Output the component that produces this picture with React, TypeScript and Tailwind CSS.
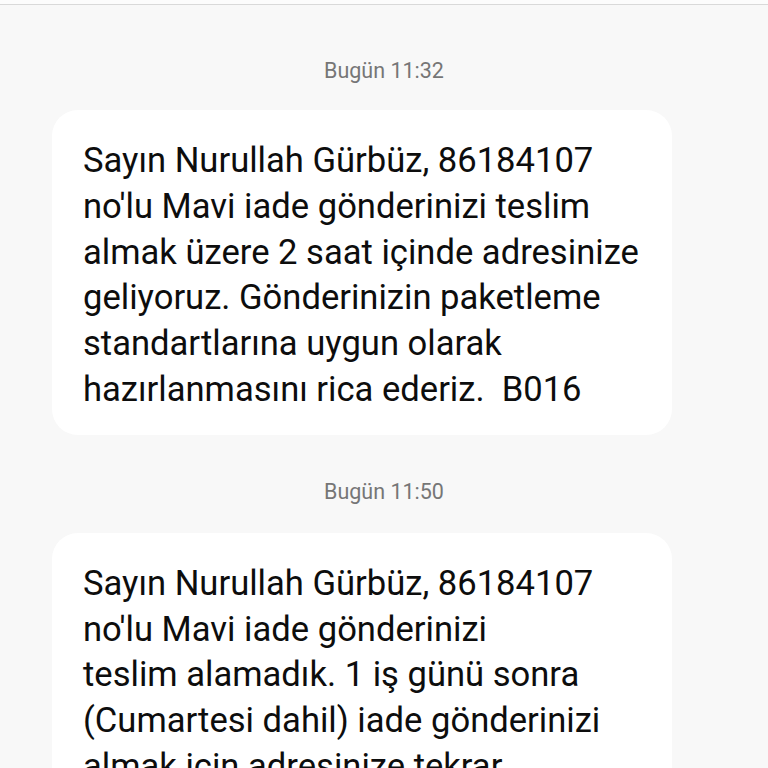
const messages = [
  {
    time: "Bugün 11:32",
    lines: [
      "Sayın Nurullah Gürbüz, 86184107",
      "no'lu Mavi iade gönderinizi teslim",
      "almak üzere 2 saat içinde adresinize",
      "geliyoruz. Gönderinizin paketleme",
      "standartlarına uygun olarak",
      "hazırlanmasını rica ederiz.\u00a0\u00a0B016",
    ],
  },
  {
    time: "Bugün 11:50",
    lines: [
      "Sayın Nurullah Gürbüz, 86184107",
      "no'lu Mavi iade gönderinizi",
      "teslim alamadık. 1 iş günü sonra",
      "(Cumartesi dahil) iade gönderinizi",
      "almak için adresinize tekrar",
      "geleceğiz.",
    ],
  },
];

export default function App() {
  return (
    <div
      className="min-h-screen bg-[#f8f8f8] overflow-hidden"
      style={{ height: 768, fontFamily: "Roboto, 'Noto Sans', sans-serif" }}
    >
      <div className="h-[5px] bg-[#fcfcfc] border-b border-[#d9d9d9]" />
      {messages.map((m, i) => (
        <div key={i}>
          <div
            className={`text-center text-[21.5px] leading-[24px] text-[#767676] ${
              i === 0 ? "mt-[54px] mb-[27px]" : "mt-[45px] mb-[29px]"
            }`}
          >
            {m.time}
          </div>
          <div className="ml-[52px] w-[620px] bg-white rounded-[26px] pl-[31px] pr-4 pt-[28px] pb-[22px]">
            {m.lines.map((l, j) => (
              <div
                key={j}
                className="whitespace-nowrap text-[34.6px] leading-[45.8px] text-[#0d0d0d]"
              >
                {l}
              </div>
            ))}
          </div>
        </div>
      ))}
    </div>
  );
}
